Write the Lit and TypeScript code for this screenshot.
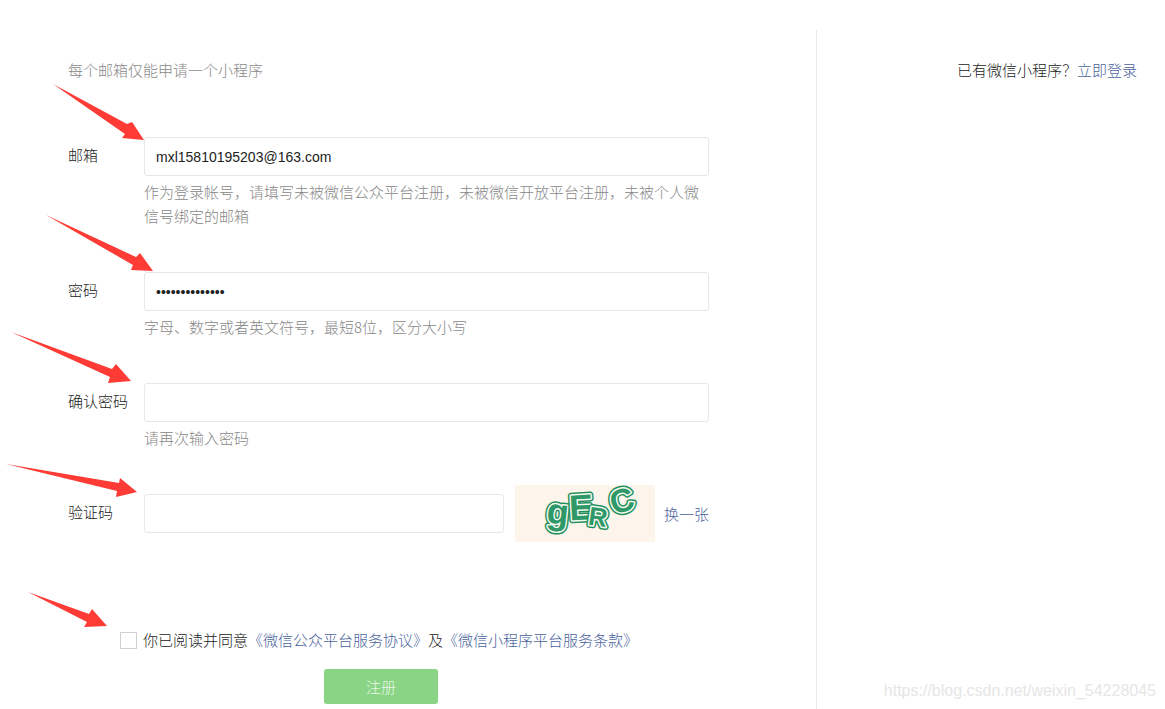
import { LitElement, html, css, svg } from "lit";
import { customElement, state } from "lit/decorators.js";

const ARROWS = [
  "53,84 127,124 132,122 144,140 122,138 125,134",
  "46,215 136,257 140,253 153,271 131,270 133,265",
  "11,332 112,369 116,364 131,381 108,383 110,377",
  "6,464 119,483 120,478 137,492 116,497 117,491",
  "28,592 89,614 92,609 107,626 84,627 87,622",
];

const GLYPHS = [
  { char: "g", x: 43, y: 39, size: 36, turn: 6 },
  { char: "E", x: 66, y: 35, size: 36, turn: -3 },
  { char: "R", x: 83, y: 41, size: 26, turn: 8 },
  { char: "C", x: 107, y: 27, size: 33, turn: -16 },
];

@customElement("captcha-image")
export class CaptchaImage extends LitElement {
  static styles = css`
    :host {
      display: block;
      flex: none;
      width: 140px;
      height: 57px;
      background: #fdf5ec;
    }
    svg {
      display: block;
      overflow: visible;
    }
    text {
      font-family: "Liberation Sans", Arial, sans-serif;
      font-weight: 700;
      text-anchor: middle;
      stroke-linejoin: round;
      stroke: #1f8f5c;
      stroke-width: 6;
      fill: #1f8f5c;
    }
    .face {
      paint-order: stroke;
      stroke: #f4faf0;
      stroke-width: 3;
      fill: #2f9868;
    }
  `;

  render() {
    return html`
      <svg width="140" height="57" viewBox="0 0 140 57" role="img" aria-label="验证码图片">
        ${GLYPHS.map(
          (g) => svg`
            <g transform="rotate(${g.turn} ${g.x} ${g.y - g.size / 3})" font-size=${g.size}>
              <text x=${g.x} y=${g.y}>${g.char}</text>
              <text class="face" x=${g.x} y=${g.y} aria-hidden="true">${g.char}</text>
            </g>`
        )}
      </svg>
    `;
  }
}

@customElement("app-root")
export class AppRoot extends LitElement {
  static styles = css`
    :host {
      display: block;
      font-family: "Noto Sans CJK SC", sans-serif;
      font-size: 15px;
      font-weight: 300;
      line-height: 24px;
      color: #222;
      background: #fff;
    }
    * {
      box-sizing: border-box;
    }
    .page {
      position: relative;
      display: grid;
      grid-template-columns: minmax(0, 1fr) 348px;
      min-height: 100vh;
      padding-top: 30px;
      overflow: hidden;
    }
    .main {
      padding: 28px 107px 5px 68px;
      border-right: 1px solid #e7e7eb;
    }
    .aside {
      padding: 28px 28px 0 0;
      text-align: right;
    }
    p {
      margin: 0;
    }
    a {
      color: #4a639c;
      text-decoration: none;
    }
    .hint {
      color: #888;
    }
    form {
      display: flex;
      flex-direction: column;
      padding-top: 55px;
    }
    .field {
      display: grid;
      grid-template-columns: 76px minmax(0, 1fr);
      row-gap: 4px;
      align-items: center;
      margin-bottom: 44px;
    }
    .field label {
      padding-bottom: 4px;
    }
    .field .hint {
      grid-column: 2;
    }
    .field.code {
      margin: -9px 0 0;
    }
    .box {
      width: 100%;
      min-width: 0;
      height: 39px;
      padding: 0 11px;
      border: 1px solid #e7e7eb;
      border-radius: 3px;
      background: #fff;
      color: #222;
      font: 400 14px "Liberation Sans", Arial, sans-serif;
      outline: none;
    }
    .code-row {
      display: flex;
      align-items: center;
    }
    .code-row captcha-image {
      margin: 0 9px 0 11px;
    }
    .code-row a {
      flex: none;
    }
    .agree {
      display: flex;
      align-items: center;
      gap: 6px;
      margin: 86px 0 17px 52px;
    }
    .agree input {
      flex: none;
      appearance: none;
      width: 17px;
      height: 17px;
      margin: 0;
      border: 1px solid #d0d0d0;
      background: #fff;
    }
    .agree input:checked {
      background: #1aad19;
    }
    button {
      align-self: center;
      width: 114px;
      height: 35px;
      margin-right: 15px;
      border: 0;
      border-radius: 3px;
      background: #8ad485;
      color: #e6f8e4;
      font: inherit;
    }
    .arrows {
      position: absolute;
      top: 0;
      left: 0;
      fill: #ff3b36;
      pointer-events: none;
    }
    .watermark {
      position: absolute;
      right: 9px;
      bottom: 7px;
      color: #e6e6e6;
      font: 400 16px/22px "Liberation Sans", Arial, sans-serif;
    }
  `;

  @state() private email = "mxl15810195203@163.com";
  @state() private password = "abcdefgh123456";

  render() {
    return html`
      <div class="page">
        <main class="main">
          <p class="hint">每个邮箱仅能申请一个小程序</p>
          <form @submit=${(e: Event) => e.preventDefault()}>
            <div class="field">
              <label for="email">邮箱</label>
              <input class="box" id="email" type="text" .value=${this.email} />
              <p class="hint">作为登录帐号，请填写未被微信公众平台注册，未被微信开放平台注册，未被个人微信号绑定的邮箱</p>
            </div>
            <div class="field">
              <label for="password">密码</label>
              <input class="box" id="password" type="password" .value=${this.password} />
              <p class="hint">字母、数字或者英文符号，最短8位，区分大小写</p>
            </div>
            <div class="field">
              <label for="confirm">确认密码</label>
              <input class="box" id="confirm" type="password" />
              <p class="hint">请再次输入密码</p>
            </div>
            <div class="field code">
              <label for="code">验证码</label>
              <div class="code-row">
                <input class="box" id="code" type="text" />
                <captcha-image></captcha-image>
                <a href="#">换一张</a>
              </div>
            </div>
            <div class="agree">
              <input id="agree" type="checkbox" />
              <span><label for="agree">你已阅读并同意</label><a href="#">《微信公众平台服务协议》</a>及<a href="#">《微信小程序平台服务条款》</a></span>
            </div>
            <button type="submit">注册</button>
          </form>
        </main>
        <aside class="aside">已有微信小程序？<a href="#">立即登录</a></aside>
        <svg class="arrows" width="160" height="640" viewBox="0 0 160 640" aria-hidden="true">
          ${ARROWS.map((points) => svg`<polygon points=${points} />`)}
        </svg>
        <span class="watermark">https://blog.csdn.net/weixin_54228045</span>
      </div>
    `;
  }
}
